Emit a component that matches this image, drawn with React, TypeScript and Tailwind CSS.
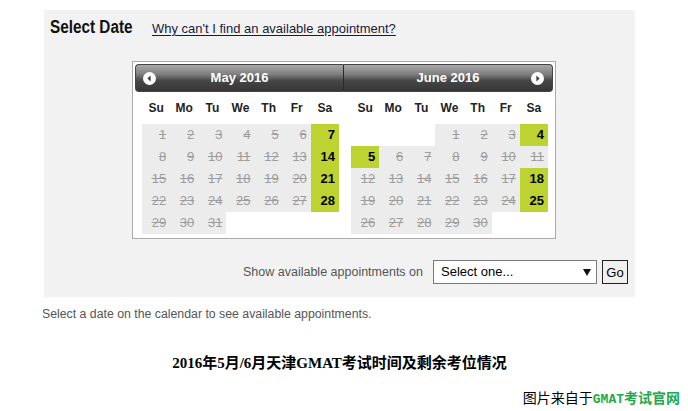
import React from "react";

const DAYS = ["Su", "Mo", "Tu", "We", "Th", "Fr", "Sa"];

type Month = {
    title: string;
    offset: number;
    length: number;
    open: number[];
    side: "left" | "right";
};

const MONTHS: Month[] = [
    { title: "May 2016", offset: 0, length: 31, open: [7, 14, 21, 28], side: "left" },
    { title: "June 2016", offset: 3, length: 30, open: [4, 5, 18, 25], side: "right" },
];

function NavIcon({ dir }: { dir: "prev" | "next" }) {
    return (
        <svg width="13" height="13" viewBox="0 0 13 13">
            <circle cx="6.5" cy="6.5" r="6.5" fill="#ffffff" />
            {dir === "prev" ? (
                <polygon points="7.6,3.6 4.4,6.5 7.6,9.4" fill="#3a3a3a" />
            ) : (
                <polygon points="5.4,3.6 8.6,6.5 5.4,9.4" fill="#3a3a3a" />
            )}
        </svg>
    );
}

function MonthPanel({ month }: { month: Month }) {
    const cells: (number | null)[] = [];
    for (let i = 0; i < 35; i++) {
        const d = i - month.offset + 1;
        cells.push(d >= 1 && d <= month.length ? d : null);
    }
    const isLeft = month.side === "left";

    return (
        <div className="w-1/2">
            {/* Header */}
            <div
                className={
                    isLeft
                        ? "relative h-[28px] flex items-center justify-center border border-[#444] border-r-[#2a2a2a] rounded-l-[4px] bg-[linear-gradient(to_bottom,#a8a8a8_0%,#808080_35%,#474747_60%,#363636_100%)]"
                        : "relative h-[28px] flex items-center justify-center border border-[#444] border-l-0 rounded-r-[4px] bg-[linear-gradient(to_bottom,#a8a8a8_0%,#808080_35%,#474747_60%,#363636_100%)]"
                }
            >
                {isLeft ? (
                    <span className="absolute left-[7px] top-[7px] flex">
                        <NavIcon dir="prev" />
                    </span>
                ) : (
                    <span className="absolute right-[8px] top-[7px] flex">
                        <NavIcon dir="next" />
                    </span>
                )}
                <span className="text-[13px] font-bold text-white">{month.title}</span>
            </div>

            <div className="ml-[7px] w-[197px]">
                {/* Day names */}
                <div className="grid grid-cols-7 h-[32px] items-center">
                    {DAYS.map((d) => (
                        <div key={d} className="text-center text-[12px] font-bold text-[#222]">
                            {d}
                        </div>
                    ))}
                </div>

                {/* Dates */}
                <div className="grid grid-cols-7">
                    {cells.map((d, i) => {
                        if (d === null) return <div key={i} className="h-[22px] bg-white" />;
                        const open = month.open.includes(d);
                        return open ? (
                            <div
                                key={i}
                                className="h-[22px] leading-[22px] text-right pr-[4px] text-[13px] font-bold text-black bg-[#bdd331]"
                            >
                                {d}
                            </div>
                        ) : (
                            <div
                                key={i}
                                className="h-[22px] leading-[22px] text-right pr-[4px] text-[13px] text-[#9d9d9d] line-through bg-[#ececec]"
                            >
                                {d}
                            </div>
                        );
                    })}
                </div>
            </div>
        </div>
    );
}

export default function App() {
    return (
        <div className="w-[688px] h-[411px] bg-white overflow-hidden font-['Liberation_Sans',Arial,sans-serif]">
            <div className="pt-[10px]">
                {/* Gray panel */}
                <div className="ml-[44px] w-[591px] bg-[#f2f2f2] pt-[6px] pb-[13px]">
                    <div className="flex items-baseline pl-[6px]">
                        <div className="w-[102px] shrink-0">
                            <h2 className="inline-block origin-left scale-x-[0.85] text-[18px] leading-[22px] font-bold text-[#111] whitespace-nowrap">
                                Select Date
                            </h2>
                        </div>
                        <a className="text-[13px] text-[#1a1a3a] underline underline-offset-2 cursor-pointer">
                            Why can't I find an available appointment?
                        </a>
                    </div>

                    {/* Calendar */}
                    <div className="ml-[88px] mt-[21px] w-[424px] border border-[#aaaaaa] bg-white pt-[2px] px-[2px] pb-[4px] flex">
                        {MONTHS.map((m) => (
                            <MonthPanel key={m.title} month={m} />
                        ))}
                    </div>

                    {/* Select row */}
                    <div className="mt-[21px] flex items-center justify-end pr-[7px]">
                        <span className="text-[12.5px] text-[#555]">Show available appointments on</span>
                        <div className="ml-[10px] w-[164px] h-[24px] border border-[#7a7a7a] bg-white flex items-center justify-between pl-[7px] pr-[5px]">
                            <span className="text-[13px] text-black">Select one...</span>
                            <svg width="8" height="7" viewBox="0 0 8 7">
                                <polygon points="0,0 8,0 4,7" fill="#111" />
                            </svg>
                        </div>
                        <button className="ml-[5px] w-[26px] h-[24px] border border-[#222] bg-[#f0f0f0] text-[13px] text-black leading-none">
                            Go
                        </button>
                    </div>
                </div>

                {/* Hint */}
                <div className="ml-[43px] mt-[10px] overflow-hidden">
                    <p className="-ml-[1px] text-[12.3px] leading-[15px] text-[#555] whitespace-nowrap">
                        Select a date on the calendar to see available appointments.
                    </p>
                </div>

                {/* Caption */}
                <div className="ml-[44px] w-[591px] mt-[31px] text-center">
                    <p className="text-[15px] leading-[20px] font-bold text-black font-['Liberation_Serif','Noto_Sans_CJK_SC',serif]">
                        2016年5月/6月天津GMAT考试时间及剩余考位情况
                    </p>
                </div>

                <div className="mt-[17px] pr-[8px] text-right">
                    <p className="text-[14px] leading-[18px] text-black font-['Liberation_Serif','Noto_Sans_CJK_SC',serif]">
                        图片来自于
                        <span className="font-bold text-[#22a84a]">
                            <span className="font-['Liberation_Mono',monospace] text-[13px]">GMAT</span>考试官网
                        </span>
                    </p>
                </div>
            </div>
        </div>
    );
}
